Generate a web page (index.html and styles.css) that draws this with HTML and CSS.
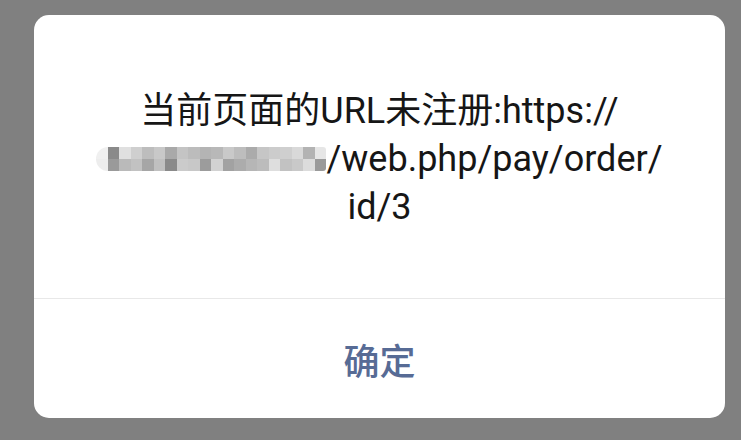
FILE: index.html
```html
<!DOCTYPE html>
<html lang="zh-CN">
<head>
<meta charset="utf-8">
<title>提示</title>
<link rel="stylesheet" href="styles.css">
</head>
<body>
<div class="dialog" role="alertdialog">
  <div class="dialog-body">
    <p class="message">当前页面的URL未注册:https://<br><span class="mosaic" aria-hidden="true"></span>/web.php/pay/order/<br>id/3</p>
  </div>
  <div class="dialog-footer">
    <button class="btn-ok" type="button">确定</button>
  </div>
</div>
</body>
</html>
```

FILE: styles.css
```css
html, body {
  margin: 0;
  padding: 0;
  background: #808080;
  width: 741px;
  height: 440px;
  overflow: hidden;
}

body {
  padding-top: 15px;
  box-sizing: border-box;
  font-family: "Roboto", "Noto Sans CJK SC", sans-serif;
}

.dialog {
  width: 691px;
  height: 403px;
  margin-left: 34px;
  background: #ffffff;
  border-radius: 15px;
  display: flex;
  flex-direction: column;
  overflow: hidden;
}

.dialog-body {
  padding: 72px 20px 0;
  height: 284px;
  box-sizing: border-box;
  border-bottom: 1px solid #e8e8e8;
}

.message {
  margin: 0;
  font-size: 36px;
  line-height: 48px;
  color: #161616;
  text-align: center;
  white-space: nowrap;
}

.mosaic {
  display: inline-block;
  width: 230px;
  height: 24px;
  vertical-align: baseline;
  border-radius: 12px 3px 3px 12px;
  background:
    linear-gradient(to right,
      #f0f0f0 0 11.5px, #8a8a8a 11.5px 23px, #e0e0e0 23px 34.5px, #cfcfcf 34.5px 46px,
      #bdbdbd 46px 57.5px, #c8c8c8 57.5px 69px, #a9a9a9 69px 80.5px, #c4c4c4 80.5px 92px,
      #bcbcbc 92px 103.5px, #b4b4b4 103.5px 115px, #b8b8b8 115px 126.5px, #c9c9c9 126.5px 138px,
      #bdbdbd 138px 149.5px, #ababab 149.5px 161px, #c6c6c6 161px 172.5px, #cccccc 172.5px 184px,
      #cfcfcf 184px 195.5px, #d9d9d9 195.5px 207px, #b3b3b3 207px 218.5px, #e6e6e6 218.5px 230px)
      top left / 100% 12px no-repeat,
    linear-gradient(to right,
      #ededed 0 11.5px, #9a9a9a 11.5px 23px, #bababa 23px 34.5px, #c2c2c2 34.5px 46px,
      #a6a6a6 46px 57.5px, #c0c0c0 57.5px 69px, #8a8a8a 69px 80.5px, #cbcbcb 80.5px 92px,
      #c8c8c8 92px 103.5px, #9c9c9c 103.5px 115px, #d2d2d2 115px 126.5px, #a2a2a2 126.5px 138px,
      #acacac 138px 149.5px, #b6b6b6 149.5px 161px, #bcbcbc 161px 172.5px, #dedede 172.5px 184px,
      #c2c2c2 184px 195.5px, #c9c9c9 195.5px 207px, #dcdcdc 207px 218.5px, #9a9a9a 218.5px 230px)
      bottom left / 100% 12px no-repeat;
}

.dialog-footer {
  flex: 1;
  display: flex;
  align-items: center;
  justify-content: center;
}

.btn-ok {
  border: 0;
  background: transparent;
  padding: 0;
  font-family: "Noto Sans CJK SC", "Roboto", sans-serif;
  font-size: 36px;
  font-weight: 500;
  line-height: 48px;
  color: #576b95;
  cursor: pointer;
}
```
